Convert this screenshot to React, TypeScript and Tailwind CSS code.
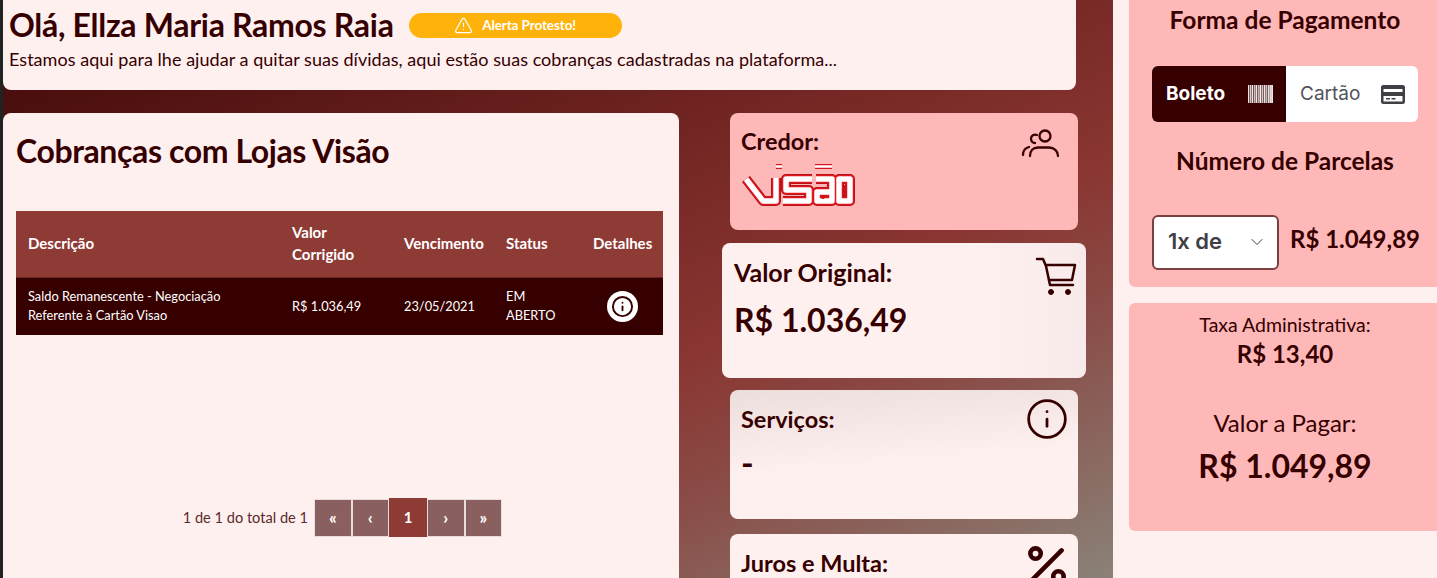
import { ChevronDown, Info, Percent, TriangleAlert } from 'lucide-react';

const barcodeBars = [0.9, 0.35, 0.8, 0.45, 0.9, 0.3, 0.75, 0.5, 0.9, 0.35, 0.7, 0.55, 0.95, 0.4, 0.8, 0.35, 0.9, 0.5, 0.75, 0.35, 0.9, 0.6, 0.85, 0.8, 0.9];

// traços do logo, desenhados em três camadas (contorno, vermelho, branco)
const logoStrokes = [
  'M5 16L22 38H35V15',
  'M71 16H45V27H68V38H42',
  'M75 16H91V38H76V29H89',
  'M98 16H109V38H98Z',
];
const logoAccents = ['M35 3.500H41', 'M74 3.500H91'];

function UsersIcon() {
  return (
    <svg width="40" height="32" viewBox="0 0 40 32" fill="none" stroke="#360000" strokeWidth="2.300" strokeLinecap="round" className="-mt-[2px]">
      <circle cx="24" cy="9" r="5.500" />
      <path d="M9 29c0-5 3-8.500 8-8.500h11c5 0 9 3.500 9 8.500" />
      <path d="M16 8c-3-1-6 .500-6 3.500s2 4.500 4 4.500" />
      <path d="M2 28c0-4 2-7 6-8" />
    </svg>
  );
}

function CartIcon() {
  return (
    <svg width="42" height="42" viewBox="0 0 42 42" fill="none" stroke="#360000" strokeWidth="2.500" strokeLinecap="round" strokeLinejoin="round" className="-mt-[1px] -mr-[2px]">
      <path d="M2 3h6l3 7 4 19h23" />
      <path d="M11 9h29l-3 15H14" />
      <circle cx="16" cy="36" r="2.500" fill="#360000" strokeWidth="1" />
      <circle cx="33" cy="36" r="2.500" fill="#360000" strokeWidth="1" />
    </svg>
  );
}

function VisaoLogo() {
  return (
    <svg width="115" height="45" viewBox="0 0 115 45" fill="none" strokeLinejoin="round">
      {logoStrokes.map((d) => (
        <path key={`outer-${d}`} d={d} stroke="#a8141a" strokeWidth="10" />
      ))}
      {logoStrokes.map((d) => (
        <path key={`red-${d}`} d={d} stroke="#e3161e" strokeWidth="8.500" />
      ))}
      {logoStrokes.map((d) => (
        <path key={`white-${d}`} d={d} stroke="#fff" strokeWidth="5.500" />
      ))}
      {logoAccents.map((d) => (
        <path key={`accent-red-${d}`} d={d} stroke="#d8141c" strokeWidth="5" />
      ))}
      {logoAccents.map((d) => (
        <path key={`accent-white-${d}`} d={d} stroke="#fff" strokeWidth="2.500" />
      ))}
      <circle cx="82" cy="34" r="2" fill="#c8141c" />
      <rect x="103" y="22" width="2.500" height="11" fill="#c8141c" />
    </svg>
  );
}

function BarcodeIcon() {
  return (
    <svg width="25" height="18" viewBox="0 0 25 18" fill="#fff">
      {barcodeBars.map((opacity, i) => (
        <rect key={i} x={i} y="0" width="1" height="18" opacity={opacity} />
      ))}
    </svg>
  );
}

function CardIcon() {
  return (
    <svg width="24" height="19" viewBox="0 0 24 19" fill="#3f3f46">
      <path d="M2.500 0h19A2.500 2.500 0 0 1 24 2.500v14a2.500 2.500 0 0 1-2.500 2.500h-19A2.500 2.500 0 0 1 0 16.500v-14A2.500 2.500 0 0 1 2.500 0Zm0 4v3h19V4Zm0 7v5.500h19V11ZM5 13h4v1.500H5Zm5.500 0h4v1.500h-4Z" fillRule="evenodd" />
    </svg>
  );
}

const pageButtons = ['«', '‹', '1', '›', '»'];

export default function App() {
  return (
    <div className="flex h-[578px] w-[1437px] overflow-hidden font-['Lato',sans-serif] text-[#360000]">
      {/* borda esquerda */}
      <div className="w-[3px] shrink-0 bg-[#1f2322]" />

      {/* conteúdo */}
      <div className="flex w-[1110px] shrink-0 flex-col bg-[linear-gradient(155deg,#3e0808_0%,#6e2320_38%,#8a3632_62%,#8a4a45_74%,#8a8278_100%)]">
        {/* saudação */}
        <div className="h-[90px] w-[1073px] shrink-0 rounded-b-lg bg-[#fff0f0] pl-[6px] pt-[5px]">
          <div className="flex items-center">
            <h1 className="text-[32px] leading-[40px] font-bold tracking-[-0.3px]">Olá, Ellza Maria Ramos Raia</h1>
            <div className="ml-[15px] flex h-[25px] w-[213px] items-center justify-center gap-[9px] rounded-full bg-[#ffb30a] text-[13.500px] font-bold tracking-[-0.1px] text-white">
              <TriangleAlert size={19} strokeWidth={1.500} />
              <span>Alerta Protesto!</span>
            </div>
          </div>
          <p className="mt-[2px] text-[18px] leading-[24px] tracking-[0.04px]">
            Estamos aqui para lhe ajudar a quitar suas dívidas, aqui estão suas cobranças cadastradas na plataforma...
          </p>
        </div>

        <div className="mt-[23px] flex">
          {/* cobranças */}
          <div className="h-[480px] w-[676px] shrink-0 rounded-lg bg-[#fff0f0] px-[13px] pt-[18px]">
            <h2 className="text-[32px] leading-[40px] font-bold tracking-[-0.4px]">Cobranças com Lojas Visão</h2>
            <table className="mt-[40px] w-[647px] table-fixed text-left text-white">
              <colgroup>
                <col className="w-[264px]" />
                <col className="w-[112px]" />
                <col className="w-[102px]" />
                <col className="w-[87px]" />
                <col className="w-[82px]" />
              </colgroup>
              <thead className="bg-[#8e3a35] text-[15px] font-bold">
                <tr className="h-[66px] border-b border-[#6b2420] leading-[22px]">
                  <th className="pb-[1px] pl-3">Descrição</th>
                  <th className="pb-[1px] pl-3">
                    Valor
                    <br />
                    Corrigido
                  </th>
                  <th className="pb-[1px] pl-3">Vencimento</th>
                  <th className="pb-[1px] pl-3">Status</th>
                  <th className="pb-[1px] pl-3">Detalhes</th>
                </tr>
              </thead>
              <tbody className="bg-[#360000] text-[12.800px] leading-[19px]">
                <tr className="h-[58px]">
                  <td className="pl-3">
                    Saldo Remanescente - Negociação
                    <br />
                    Referente à Cartão Visao
                  </td>
                  <td className="pl-3">R$ 1.036,49</td>
                  <td className="pl-3">23/05/2021</td>
                  <td className="pl-3">
                    EM
                    <br />
                    ABERTO
                  </td>
                  <td>
                    <div className="ml-[26px] flex h-[31px] w-[31px] items-center justify-center rounded-full bg-white">
                      <Info size={23} strokeWidth={2} className="text-[#360000]" />
                    </div>
                  </td>
                </tr>
              </tbody>
            </table>
            {/* paginação */}
            <div className="mt-[163px] flex items-center justify-end pr-[164px]">
              <span className="mr-[6px] text-[14.600px] text-[#5a2a2a]">1 de 1 do total de 1</span>
              {pageButtons.map((label) => (
                <div
                  key={label}
                  className={
                    label === '1'
                      ? 'flex h-[39px] w-[38px] items-center justify-center bg-[#8e3a35] text-[15px] font-bold text-white'
                      : 'flex h-[38px] w-[37.500px] items-center justify-center border border-[#e8dcdc] bg-[#8a5f5f] text-[17px] font-bold text-white'
                  }
                >
                  {label}
                </div>
              ))}
            </div>
          </div>

          {/* resumo */}
          <div className="ml-[43px] flex w-[364px] shrink-0 flex-col items-center">
            <div className="flex h-[117px] w-[348px] shrink-0 justify-between rounded-lg bg-[#ffb8b8] pl-[11px] pr-[17px] pt-[15px]">
              <div>
                <p className="text-[23.500px] leading-[26px] font-bold">Credor:</p>
                <div className="mt-[9px]">
                  <VisaoLogo />
                </div>
              </div>
              <div className="mt-[1px]">
                <UsersIcon />
              </div>
            </div>
            <div className="mt-[13px] flex h-[135px] w-[364px] shrink-0 justify-between rounded-lg bg-[linear-gradient(90deg,#fff0f0_70%,#f8eaea_100%)] pl-[12px] pr-[11px] pt-[14px]">
              <div>
                <p className="text-[25px] leading-[30px] font-bold">Valor Original:</p>
                <p className="mt-[13px] text-[32px] leading-[40px] font-bold">R$ 1.036,49</p>
              </div>
              <CartIcon />
            </div>
            <div className="mt-[12px] flex h-[129px] w-[348px] shrink-0 justify-between rounded-lg bg-[linear-gradient(175deg,#ecdedd_0%,#fff0f0_55%)] pl-[11px] pr-[9px] pt-[15px]">
              <div>
                <p className="text-[23.500px] leading-[28px] font-bold">Serviços:</p>
                <p className="mt-[14px] text-[34px] leading-[32px] font-bold">-</p>
              </div>
              <Info size={44} strokeWidth={1.500} className="-mt-[8px]" />
            </div>
            <div className="mt-[15px] flex h-[129px] w-[348px] shrink-0 justify-between rounded-lg bg-[#fff0f0] pl-[11px] pr-[6px] pt-[15px]">
              <p className="text-[23.500px] leading-[28px] font-bold">Juros e Multa:</p>
              <Percent size={50} strokeWidth={2.200} className="-mt-[9px]" />
            </div>
          </div>
        </div>
      </div>

      {/* pagamento */}
      <div className="w-[324px] shrink-0 overflow-hidden bg-[#fff0f0] pl-[16px]">
        <div className="flex h-[287px] w-[312px] flex-col items-center rounded-b-md bg-[#ffb8b8]">
          <h3 className="mt-[5px] text-[24.500px] leading-[30px] font-bold">Forma de Pagamento</h3>
          <div className="mt-[31px] flex h-[56px] w-[266px] overflow-hidden rounded-md font-['Inter',sans-serif] text-[19px]">
            <div className="flex w-[134px] items-center justify-between bg-[#360000] pl-[14px] pr-[13px] font-bold text-white">
              <span>Boleto</span>
              <BarcodeIcon />
            </div>
            <div className="flex w-[132px] items-center justify-between bg-white pl-[14px] pr-[13px] font-normal text-[#52525b]">
              <span>Cartão</span>
              <CardIcon />
            </div>
          </div>
          <h3 className="mt-[24px] text-[24.500px] leading-[30px] font-bold">Número de Parcelas</h3>
          <div className="mt-[39px] flex w-[266px] items-center justify-between">
            <div className="flex h-[55px] w-[127px] items-center justify-between rounded-md border-2 border-[#7a4040] bg-white pb-[2px] pl-[14px] pr-[10px] font-['Inter',sans-serif] text-[22px] font-semibold text-[#3f3f46]">
              <span>1x de</span>
              <ChevronDown size={20} strokeWidth={1.200} />
            </div>
            <span className="-mr-[2px] mb-[7px] whitespace-nowrap text-[24px] font-bold">R$ 1.049,89</span>
          </div>
        </div>
        <div className="mt-[16px] flex h-[228px] w-[312px] flex-col items-center rounded-md bg-[#ffb8b8] pt-[10px]">
          <p className="text-[19.500px] leading-[24px]">Taxa Administrativa:</p>
          <p className="mt-[2px] text-[24px] leading-[30px] font-bold">R$ 13,40</p>
          <p className="mt-[34px] text-[24px] leading-[40px]">Valor a Pagar:</p>
          <p className="mt-[1px] text-[32px] leading-[44px] font-bold">R$ 1.049,89</p>
        </div>
      </div>
    </div>
  );
}
